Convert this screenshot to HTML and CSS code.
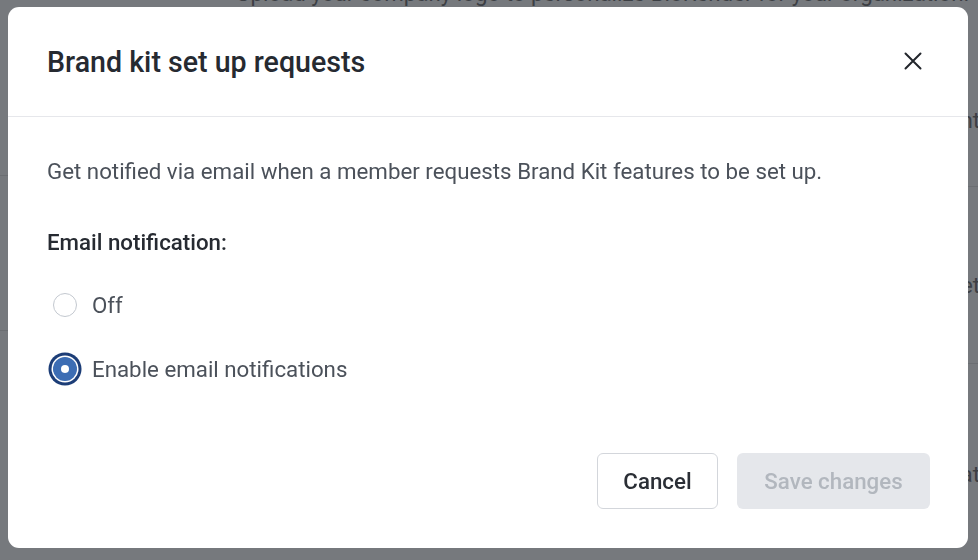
FILE: index.html
```html
<!DOCTYPE html>
<html lang="en">
<head>
<meta charset="utf-8">
<title>Brand kit set up requests</title>
<link rel="stylesheet" href="styles.css">
</head>
<body>
<div class="page">
  <aside class="side">
    <div class="side-row r1"></div>
    <div class="side-row r2"></div>
  </aside>
  <main class="content">
    <p class="lead">Upload your company logo to personalize BioRender for your organization.</p>
    <div class="row row1"><span>Brand kit content</span></div>
    <div class="row row2"><span>Style sheet</span></div>
    <div class="row row3"><span>Export format</span></div>
  </main>
</div>

<div class="modal" role="dialog" aria-labelledby="mtitle">
  <header class="modal-head">
    <h2 id="mtitle" class="modal-title">Brand kit set up requests</h2>
    <button class="close" aria-label="Close">
      <svg width="18" height="18" viewBox="0 0 18 18" fill="none" stroke="#22262c" stroke-width="2" stroke-linecap="round"><path d="M1.5 1.5L16.5 16.5M16.5 1.5L1.5 16.5"/></svg>
    </button>
  </header>
  <section class="modal-body">
    <p class="desc">Get notified via email when a member requests Brand Kit features to be set up.</p>
    <p class="label">Email notification:</p>
    <label class="opt"><span class="radio"></span><span class="opt-text">Off</span></label>
    <label class="opt"><span class="radio checked"></span><span class="opt-text">Enable email notifications</span></label>
  </section>
  <footer class="modal-foot">
    <button class="btn btn-cancel">Cancel</button>
    <button class="btn btn-save" disabled>Save changes</button>
  </footer>
</div>
</body>
</html>
```
FILE: styles.css
```css
* { box-sizing: border-box; }
html, body { height: 100%; }
body {
  margin: 0;
  background: #76797d;
  font-family: Roboto, "Noto Sans", "Liberation Sans", sans-serif;
  overflow: hidden;
}
.page {
  display: flex;
  height: 560px;
}
.side {
  width: 200px;
  display: flex;
  flex-direction: column;
}
.side-row {
  border-bottom: 1px solid #6b6e72;
}
.side-row.r1 { height: 176px; }
.side-row.r2 { height: 155px; }
.content {
  flex: 1;
  padding-left: 36px;
  display: flex;
  flex-direction: column;
}
.lead {
  margin: -20px 0 0;
  font-size: 22.3px;
  line-height: 26px;
  color: #3c3f44;
  white-space: nowrap;
}
.row {
  display: flex;
  justify-content: flex-end;
  margin-right: -2px;
  font-size: 22.3px;
  color: #3c3f44;
  white-space: nowrap;
}
.row1 { height: 181px; border-bottom: 1px solid #6b6e72; align-items: center; padding-top: 48px; }
.row2 { height: 177px; border-bottom: 1px solid #6b6e72; align-items: center; padding-top: 20px; }
.row3 { height: 180px; align-items: center; padding-top: 40px; }

.modal {
  position: fixed;
  left: 8px;
  top: 7px;
  width: 960px;
  height: 541px;
  background: #fff;
  border-radius: 11px;
  display: flex;
  flex-direction: column;
}
.modal-head {
  height: 110px;
  padding: 0 39px;
  display: flex;
  align-items: center;
  justify-content: space-between;
  border-bottom: 1px solid #e6e7eb;
}
.modal-title {
  margin: 0;
  font-size: 28.6px;
  line-height: 34px;
  font-weight: 500;
  color: #262a31;
}
.close {
  width: 32px;
  height: 32px;
  border: 0;
  background: none;
  padding: 0;
  display: flex;
  align-items: center;
  justify-content: center;
  cursor: pointer;
  margin-top: -2px;
}
.modal-body {
  padding: 40px 39px 0;
  display: flex;
  flex-direction: column;
}
.desc {
  margin: 0;
  font-size: 22.3px;
  line-height: 28px;
  color: #4b515a;
}
.label {
  margin: 43px 0 0;
  font-size: 22.3px;
  line-height: 28px;
  font-weight: 500;
  color: #262a31;
}
.opt {
  display: flex;
  align-items: center;
  height: 40px;
  gap: 15px;
  padding-left: 6px;
  margin-top: 24px;
  cursor: pointer;
}
.label + .opt { margin-top: 29px; }
.radio {
  width: 24px;
  height: 24px;
  border-radius: 50%;
  border: 1px solid #c3c8cf;
  background: #fff;
  flex: none;
  display: flex;
  align-items: center;
  justify-content: center;
}
.radio.checked {
  border: 0;
  background: #3c6db4;
  box-shadow: 0 0 0 1.5px #fff, 0 0 0 4.5px #1c3d77;
}
.radio.checked::after {
  content: "";
  width: 8px;
  height: 8px;
  border-radius: 50%;
  background: #fff;
}
.opt-text {
  font-size: 22.3px;
  line-height: 28px;
  color: #4b515a;
}
.modal-foot {
  margin-top: auto;
  padding: 0 38px 39px;
  display: flex;
  justify-content: flex-end;
  gap: 19px;
}
.btn {
  height: 56px;
  border-radius: 6px;
  font-family: inherit;
  font-size: 22.3px;
  font-weight: 500;
  padding: 0;
}
.btn-cancel {
  width: 121px;
  background: #fff;
  border: 1px solid #d3d6db;
  color: #2a2e35;
}
.btn-save {
  width: 193px;
  background: #e5e7eb;
  border: 0;
  color: #b2b7be;
}
```
